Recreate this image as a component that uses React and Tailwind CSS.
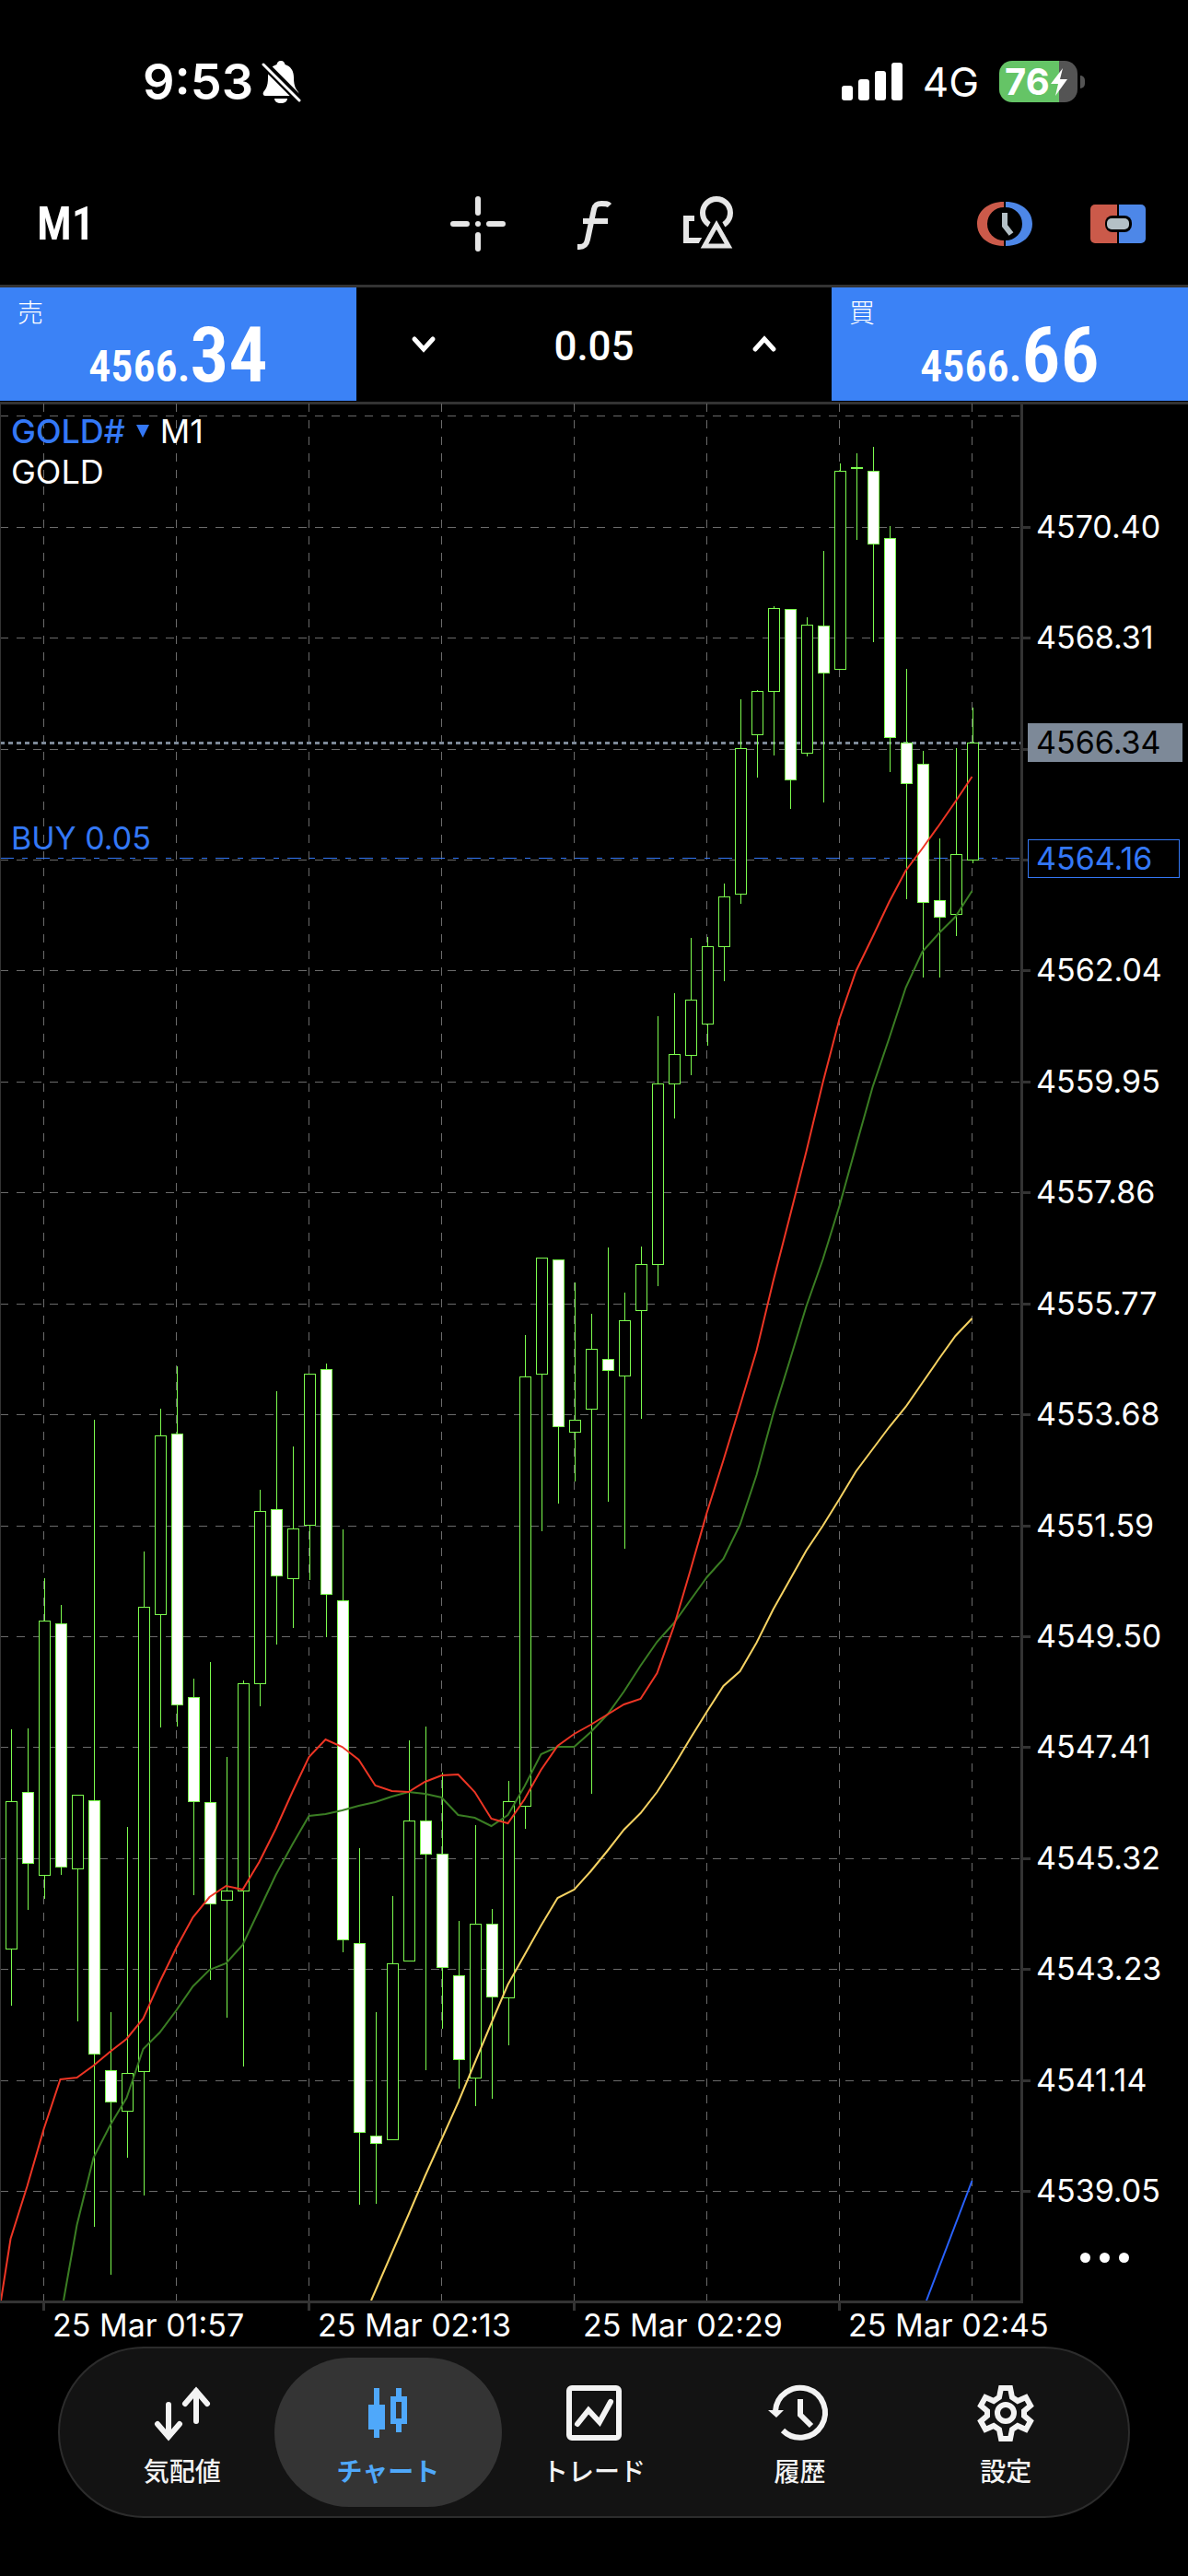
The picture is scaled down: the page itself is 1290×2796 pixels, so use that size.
import React, { useState } from 'react';

// Each candle: [high, body top, body bottom, low, bearish]
const CANDLES = [
  [1877, 1955, 2115, 2177, 0], [1876, 1945, 2022, 2073, 1], [1713, 1759, 2035, 2061, 0],
  [1742, 1762, 2026, 2035, 1], [1948, 1948, 2028, 2194, 0], [1541, 1954, 2229, 2417, 1],
  [2184, 2247, 2281, 2469, 1], [1983, 2250, 2291, 2342, 0], [1684, 1744, 2248, 2383, 0],
  [1529, 1558, 1752, 1875, 0], [1483, 1556, 1850, 1874, 1], [1822, 1842, 1955, 2057, 1],
  [1804, 1956, 2066, 2149, 1], [1907, 2052, 2062, 2190, 0], [1824, 1827, 2052, 2243, 0],
  [1617, 1640, 1827, 1852, 0], [1510, 1638, 1710, 1785, 1], [1570, 1659, 1713, 1767, 0],
  [1491, 1491, 1655, 1715, 0], [1480, 1486, 1730, 1777, 1], [1660, 1737, 2105, 2119, 1],
  [2006, 2109, 2314, 2393, 1], [2184, 2318, 2326, 2392, 1], [2058, 2131, 2322, 2322, 0],
  [1889, 1976, 2128, 2128, 0], [1874, 1976, 2012, 2247, 1], [1924, 2012, 2135, 2202, 1],
  [2085, 2144, 2235, 2267, 1], [1981, 2088, 2255, 2286, 0], [2072, 2088, 2167, 2278, 1],
  [1933, 1955, 2168, 2220, 0], [1449, 1494, 1960, 1985, 0], [1365, 1365, 1491, 1662, 0],
  [1367, 1367, 1548, 1632, 1], [1392, 1541, 1554, 1608, 0], [1426, 1464, 1529, 1947, 0],
  [1354, 1475, 1487, 1630, 1], [1403, 1433, 1493, 1681, 0], [1353, 1372, 1422, 1540, 0],
  [1103, 1176, 1372, 1396, 0], [1078, 1144, 1176, 1214, 0], [1018, 1085, 1145, 1167, 0],
  [1017, 1027, 1111, 1135, 0], [959, 973, 1027, 1065, 0], [759, 812, 970, 981, 0],
  [749, 750, 797, 844, 0], [658, 660, 750, 820, 0], [661, 661, 846, 878, 1],
  [670, 678, 817, 821, 0], [598, 679, 730, 871, 1], [503, 511, 726, 726, 0],
  [492, 507, 508, 586, 0], [485, 511, 590, 697, 1], [571, 584, 800, 838, 1],
  [726, 806, 850, 976, 1], [815, 829, 979, 1061, 1], [910, 977, 995, 1061, 1],
  [812, 927, 992, 1016, 0], [768, 806, 933, 937, 0],
];

// Moving averages, one value per candle beginning at candle `from`
const AVERAGES = [
  {
    color: '#f5d262', start: [403, 2497], from: 24,
    values: [2404, 2362, 2322, 2282, 2239, 2196, 2154, 2122, 2090, 2060, 2051, 2031, 2009, 1986, 1968, 1945,
      1917, 1887, 1858, 1830, 1814, 1783, 1747, 1715, 1683, 1656, 1627, 1597, 1573, 1549, 1527, 1501, 1475,
      1450, 1431],
  },
  {
    color: '#3a7d23', start: [69, 2497], from: 4,
    values: [2415, 2342, 2307, 2277, 2224, 2206, 2182, 2156, 2138, 2131, 2111, 2073, 2035, 2002, 1971, 1969,
      1965, 1960, 1956, 1950, 1945, 1947, 1951, 1970, 1973, 1982, 1970, 1939, 1904, 1896, 1896, 1880, 1861,
      1836, 1808, 1782, 1762, 1737, 1712, 1692, 1655, 1601, 1535, 1477, 1418, 1367, 1309, 1244, 1180, 1127,
      1072, 1033, 1013, 995, 967],
  },
  {
    color: '#ed3524', start: [1, 2497], from: 0,
    values: [2430, 2373, 2311, 2257, 2255, 2242, 2227, 2213, 2191, 2151, 2114, 2081, 2059, 2047, 2051, 2021,
      1985, 1945, 1907, 1888, 1896, 1910, 1938, 1944, 1945, 1934, 1927, 1926, 1945, 1974, 1979, 1953, 1921,
      1895, 1882, 1872, 1861, 1850, 1844, 1816, 1766, 1705, 1642, 1585, 1526, 1466, 1391, 1321, 1250, 1175,
      1106, 1054, 1017, 979, 945, 921, 896, 870, 843],
  },
  { color: '#2962ff', start: [1006, 2497], from: 58, values: [2367] },
];

const PRICE_ROWS = [
  [451, ''], [572, '4570.40'], [692, '4568.31'], [813, ''], [933, ''], [1053, '4562.04'],
  [1174, '4559.95'], [1294, '4557.86'], [1415, '4555.77'], [1535, '4553.68'], [1656, '4551.59'],
  [1776, '4549.50'], [1896, '4547.41'], [2017, '4545.32'], [2137, '4543.23'], [2258, '4541.14'],
  [2378, '4539.05'],
];

const TIME_COLUMNS = [
  [47, '25 Mar 01:57'], [191, ''], [335, '25 Mar 02:13'], [479, ''],
  [623, '25 Mar 02:29'], [767, ''], [911, '25 Mar 02:45'], [1055, ''],
];

const Candle = ({ index, data }) => {
  const [high, top, bottom, low, bearish] = data;
  const x = 12 + index * 18;
  return (
    <g stroke="#7cfc4e">
      <path d={`M${x + 0.5} ${high}V${low}`} />
      <rect x={x - 5.5} y={top + 0.5} width="12" height={bottom - top} fill={bearish ? '#fff' : '#000'} />
    </g>
  );
};

const Chart = () => (
  <svg viewBox="0 436 1290 2111" className="block w-full font-['Inter',sans-serif]" fill="none">
    <rect x="0" y="436" width="1290" height="3" fill="#333" />

    {/* Grid */}
    <g stroke="#6b6b6b" strokeDasharray="9 9" shapeRendering="crispEdges">
      {PRICE_ROWS.map(([y]) => <path key={y} d={`M0 ${y + 0.5}H1108`} />)}
      {TIME_COLUMNS.map(([x]) => <path key={x} d={`M${x + 0.5} 438V2497`} />)}
    </g>

    {/* Order and bid lines */}
    <path d="M0 931.5H1108" stroke="#3478f6" strokeDasharray="15 9 6 9" shapeRendering="crispEdges" />
    <path d="M0 806.5H1108" stroke="#7d8998" strokeWidth="3" strokeDasharray="5 4" shapeRendering="crispEdges" />

    <g shapeRendering="crispEdges">
      {CANDLES.map((data, i) => <Candle key={i} index={i} data={data} />)}
    </g>

    {AVERAGES.map(({ color, start, from, values }) => (
      <polyline
        key={color}
        stroke={color}
        strokeWidth="2"
        points={[start, ...values.map((y, i) => [11.5 + (from + i) * 18, y])].join(' ')}
      />
    ))}

    {/* Frame and ticks */}
    <g fill="#333">
      <rect x="0" y="436" width="1" height="2062" />
      <rect x="0" y="2497" width="1111" height="3" />
      <rect x="1108" y="436" width="3" height="2064" />
      {PRICE_ROWS.slice(1).map(([y]) => <rect key={y} x="1111" y={y - 1} width="8" height="3" />)}
      {TIME_COLUMNS.filter(([, label]) => label).map(([x]) => <rect key={x} x={x - 1} y="2500" width="3" height="8" />)}
    </g>

    <g fill="#fff" fontSize="34">
      {PRICE_ROWS.map(([y, label]) => label && <text key={y} x="1125" y={y + 12}>{label}</text>)}
      {TIME_COLUMNS.map(([x, label]) => label && <text key={x} x={x + 10} y="2536">{label}</text>)}
    </g>

    <text x="12" y="922" fill="#3478f6" fontSize="34">BUY 0.05</text>

    <rect x="1116" y="785" width="168" height="42" fill="#7d8998" />
    <text x="1125" y="818" fill="#000" fontSize="34">4566.34</text>
    <rect x="1116.5" y="911.5" width="164" height="41" fill="#000" stroke="#3478f6" />
    <text x="1125" y="944" fill="#3478f6" fontSize="34">4564.16</text>
  </svg>
);

const StatusBar = () => (
  <div className="flex h-[177px] items-center justify-between pl-[155px] pr-[112px]">
    <div className="flex items-center gap-2">
      <span className="text-[54px] font-semibold leading-none">9:53</span>
      <svg width="44" height="48" viewBox="0 0 44 48">
        <path fill="#fff" d="M22 1c3 0 4 2 4.500 4C33 7 36 12 36 19c0 11 3 13 5 16 1 2 0 4-2 4H5c-2 0-3-2-2-4 2-3 5-5 5-16C8 12 11 7 17.500 5 18 3 19 1 22 1zM15 42h14c0 3-3 5-7 5s-7-2-7-5z" />
        <path stroke="#000" strokeWidth="9" d="M2 3l41 41" />
        <path stroke="#fff" strokeWidth="3" strokeLinecap="round" d="M3 5l39 39" />
      </svg>
    </div>
    <div className="flex items-center gap-[22px]">
      <svg width="66" height="42" viewBox="0 0 66 42" fill="#fff">
        <rect x="0" y="25" width="12" height="16" rx="3" />
        <rect x="18" y="18" width="12" height="23" rx="3" />
        <rect x="36" y="9" width="12" height="32" rx="3" />
        <rect x="54" y="0" width="12" height="41" rx="3" />
      </svg>
      <span className="text-[44px] leading-none">4G</span>
      <div className="flex items-center gap-[3px]">
        <div className="flex h-[45px] w-[85px] items-center rounded-[14px] bg-linear-to-r from-[#65c466] from-77% to-[#545454] to-77% pl-[6px]">
          <span className="text-[40px] font-bold leading-none">76</span>
          <svg className="shrink-0" width="20" height="30" viewBox="0 0 20 30" fill="#fff">
            <path d="M14 0L1 17h8L6 30 19 12h-8z" />
          </svg>
        </div>
        <div className="h-[14px] w-[5px] rounded-r-full bg-[#545454]" />
      </div>
    </div>
  </div>
);

const Toolbar = () => (
  <div className="grid h-[135px] grid-cols-3 items-center border-b-3 border-[#333] pl-11 pr-[46px]">
    <button className="-ml-1 justify-self-start font-['Roboto_Condensed','Roboto',sans-serif] text-[50px] font-semibold leading-none">M1</button>
    <div className="flex justify-center gap-[61px]">
      <button aria-label="Crosshair">
        <svg width="64" height="64" viewBox="0 0 64 64" stroke="#e6e6e6" strokeWidth="6" strokeLinecap="round">
          <path d="M32 5v15M32 44v15M5 32h15M44 32h15M32 32h0" />
        </svg>
      </button>
      <button aria-label="Indicators">
        <svg width="64" height="64" viewBox="0 0 64 64" fill="none" stroke="#e6e6e6" strokeWidth="6">
          <path d="M15 57h2c6 0 8-3 9-8l7-33c1-4 3-6 8-6 5 0 7 0 9 2M21 29h27" />
        </svg>
      </button>
      <button aria-label="Objects">
        <svg width="64" height="64" viewBox="0 0 64 64" fill="none" stroke="#e6e6e6" strokeWidth="6">
          <path d="M17 26H8v24h17" />
          <circle cx="41" cy="20" r="15" />
          <path d="M41 32L27 57h28z" stroke="#000" strokeWidth="13" />
          <path d="M41 33L28 56h26z" strokeWidth="5" />
        </svg>
      </button>
    </div>
    <div className="flex gap-[63px] justify-self-end">
      <button aria-label="History depth">
        <svg width="60" height="60" viewBox="0 0 60 60" fill="none">
          <path fill="#cb5a4a" d="M29 6C12 6 0 16 0 30s12 24 29 24v-6a18 18 0 010-36z" />
          <path fill="#4d87e8" d="M31 6c17 0 29 10 29 24S48 54 31 54v-6a18 18 0 000-36z" />
          <path stroke="#b4c0c6" strokeWidth="6" d="M30 18v14l7 9" />
        </svg>
      </button>
      <button aria-label="One click trading">
        <svg width="60" height="60" viewBox="0 0 60 60">
          <path fill="#cb5a4a" d="M5 9h24v42H5a5 5 0 01-5-5V14a5 5 0 015-5z" />
          <path fill="#4d87e8" d="M31 9h24a5 5 0 015 5v32a5 5 0 01-5 5H31z" />
          <rect x="16" y="21" width="29" height="18" rx="8" fill="#000" />
          <rect x="18" y="24" width="24" height="12" rx="5" fill="#b4c0c6" />
        </svg>
      </button>
    </div>
  </div>
);

const PriceButton = ({ label, whole, pips }) => (
  <button className="flex h-full flex-col bg-[#3b82f6]">
    <span className="self-start pl-[19px] pt-[10px] font-['Noto_Sans_CJK_JP',sans-serif] text-[28px] font-light leading-8">{label}</span>
    <span className="-mt-1 self-center font-['Roboto_Condensed','Roboto',sans-serif] text-[48px] font-semibold leading-none">
      {whole}<span className="text-[84px] leading-[72px]">{pips}</span>
    </span>
  </button>
);

const Chevron = ({ d }) => (
  <svg width="32" height="32" viewBox="0 0 32 32" fill="none" stroke="#fff" strokeWidth="5" strokeLinecap="round">
    <path d={d} />
  </svg>
);

const TradePanel = () => {
  const [volume, setVolume] = useState('0.05');

  const step = (delta) => setVolume((v) => Math.max(0.01, Number(v) + delta).toFixed(2));

  return (
    <div className="mb-px grid h-[123px] grid-cols-[3fr_4fr_3fr] grid-rows-1">
      <PriceButton label="売" whole="4566." pips="34" />
      <div className="flex items-center justify-between px-[57px]">
        <button aria-label="Decrease volume" onClick={() => step(-0.01)}>
          <Chevron d="M6 10l10 11 10-11" />
        </button>
        <input
          aria-label="Volume"
          className="w-40 bg-transparent pt-1 text-center font-['Roboto',sans-serif] text-[44px] font-medium outline-none"
          value={volume}
          onChange={(e) => setVolume(e.target.value)}
        />
        <button aria-label="Increase volume" onClick={() => step(0.01)}>
          <Chevron d="M6 21l10-11 10 11" />
        </button>
      </div>
      <PriceButton label="買" whole="4566." pips="66" />
    </div>
  );
};

const TABS = [
  {
    label: '気配値',
    icon: <path strokeWidth="6" strokeLinecap="round" d="M15 21v33M3 42l12 14 12-14M45 39V6M33 20L45 6l12 14" />,
  },
  {
    label: 'チャート',
    icon: (
      <g stroke="none" fill="currentColor">
        <path d="M15 3h6v18h6v27h-6v9h-6v-9H9V21h6z" />
        <path fillRule="evenodd" d="M39 3h6v9h6v30h-6v9h-6v-9h-6V12h6zM39 18v18h6V18z" />
      </g>
    ),
  },
  {
    label: 'トレード',
    icon: (
      <>
        <rect x="3" y="3" width="54" height="54" rx="3" strokeWidth="6" />
        <path strokeWidth="6" strokeLinecap="round" d="M12 42l12-15 12 13 12-22" />
      </>
    ),
  },
  {
    label: '履歴',
    icon: (
      <>
        <path strokeWidth="6" d="M3 28a27 27 0 11 8 21" />
        <path stroke="none" fill="currentColor" d="M-5 27h17l-8 8z" />
        <path strokeWidth="6" d="M30 15v17l12 12" />
      </>
    ),
  },
  {
    label: '設定',
    icon: (
      <>
        <path strokeWidth="6" d="M25 3h10l2 10 6 4 9-4 5 9-7 6v5l7 6-5 9-9-4-6 4-2 10H25l-2-10-6-4-9 4-5-9 7-6v-5l-7-6 5-9 9 4 6-4z" />
        <circle cx="30" cy="30" r="9" strokeWidth="6" />
      </>
    ),
  },
];

const TabBar = () => {
  const [active, setActive] = useState('チャート');

  return (
    <nav className="mx-[63px] mb-[63px] grid h-[186px] grid-cols-5 rounded-full border-2 border-[#2c2c2c] bg-[#131313] px-[21px] py-[10px] font-['Noto_Sans_CJK_JP',sans-serif]">
      {TABS.map(({ label, icon }) => (
        <button
          key={label}
          onClick={() => setActive(label)}
          className={`-mx-3 flex flex-col items-center rounded-full pt-[30px] text-[28px] leading-10 ${
            active === label ? 'bg-[#343434] font-bold text-[#4fa8fa]' : 'font-medium text-[#f3f3f3]'
          }`}
        >
          <svg className="mb-3 overflow-visible" width="60" height="60" viewBox="0 0 60 60" fill="none" stroke="currentColor">
            {icon}
          </svg>
          {label}
        </button>
      ))}
    </nav>
  );
};

export default function App() {
  return (
    <div className="min-h-screen bg-black font-['Inter',sans-serif] text-white">
      <StatusBar />
      <Toolbar />
      <TradePanel />
      <main className="relative">
        <Chart />
        <div className="absolute left-3 top-[10px] text-[36px] leading-[44px]">
          <button className="flex items-center gap-3">
            <span className="font-medium text-[#3478f6]">GOLD#</span>
            <svg width="14" height="16" viewBox="0 0 14 16" fill="#3478f6">
              <path d="M0 1h14L7 15z" />
            </svg>
            <span>M1</span>
          </button>
          <div>GOLD</div>
        </div>
        <button aria-label="More" className="absolute bottom-[87px] right-[60px] flex gap-[10px] p-1">
          <span className="size-[11px] rounded-full bg-white" />
          <span className="size-[11px] rounded-full bg-white" />
          <span className="size-[11px] rounded-full bg-white" />
        </button>
      </main>
      <TabBar />
    </div>
  );
}
